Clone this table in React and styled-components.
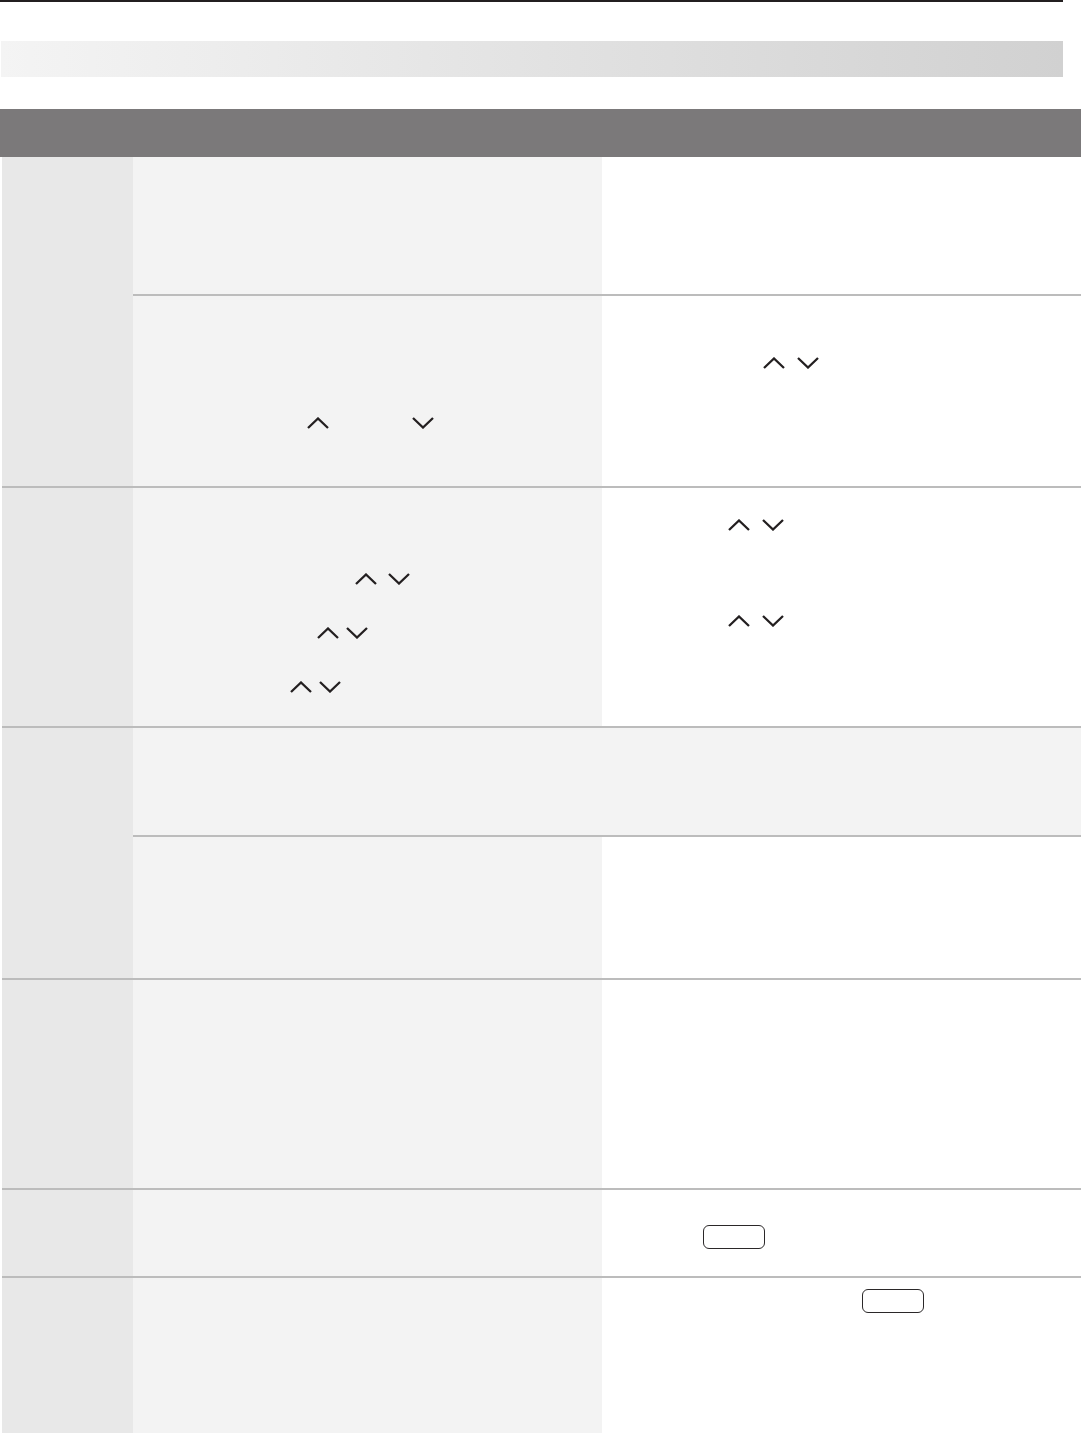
import styled, { createGlobalStyle } from "styled-components";

const GlobalStyle = createGlobalStyle`
  html, body {
    margin: 0;
    padding: 0;
    background: #ffffff;
    font-family: "Liberation Sans", Arial, sans-serif;
  }
`;

const Page = styled.div`
  display: flex;
  flex-direction: column;
  width: 1081px;
  height: 1434px;
  overflow: hidden;
`;

const TopRule = styled.div`
  width: 1063px;
  height: 2px;
  background: #231f20;
`;

const Banner = styled.div`
  width: 1062px;
  height: 36px;
  margin: 39px 0 0 1px;
  background: linear-gradient(to right, #f4f4f4, #d1d1d1);
`;

const HeaderBar = styled.div`
  width: 1081px;
  height: 48px;
  margin-top: 32px;
  background: #7b797a;
`;

const Table = styled.div`
  display: flex;
  flex-direction: column;
  margin-left: 2px;
`;

const Row = styled.div`
  display: grid;
  grid-template-columns: 131px 1fr;
  border-bottom: ${(p) => (p.$last ? "none" : "2px solid #bcbcbc")};
`;

const Label = styled.div`
  background: #e8e8e8;
`;

const SubRows = styled.div`
  display: flex;
  flex-direction: column;
`;

const SubRow = styled.div`
  display: grid;
  grid-template-columns: 469px 1fr;
  height: ${(p) => p.$h}px;
  border-bottom: ${(p) => (p.$divider ? "2px solid #bcbcbc" : "none")};
`;

const Cell = styled.div`
  display: flex;
  flex-direction: column;
  background: ${(p) => (p.$shade ? "#f3f3f3" : "#ffffff")};
`;

const Line = styled.div`
  display: flex;
  align-items: center;
  padding-left: ${(p) => p.$indent}px;
  margin-top: ${(p) => p.$top}px;
  gap: ${(p) => p.$gap || 0}px;
`;

const KeyButton = styled.span`
  display: inline-block;
  width: 60px;
  height: 22px;
  border: 1px solid #2b2829;
  border-radius: 6px;
  background: #ffffff;
`;

const Chevron = ({ down }) => (
  <svg width="22" height="12" viewBox="0 0 22 12" fill="none">
    <polyline
      points={down ? "1,1 11,10.5 21,1" : "1,11 11,1.5 21,11"}
      stroke="#231f20"
      strokeWidth="2.3"
      strokeLinejoin="miter"
    />
  </svg>
);

const Arrows = ({ indent, top, gap }) => (
  <Line $indent={indent} $top={top} $gap={gap}>
    <Chevron />
    <Chevron down />
  </Line>
);

const App = () => {
  return (
    <Page>
      <GlobalStyle />
      <TopRule />
      <Banner />
      <HeaderBar />
      <Table>
        <Row>
          <Label />
          <SubRows>
            <SubRow $h={137} $divider>
              <Cell $shade />
              <Cell />
            </SubRow>
            <SubRow $h={190}>
              <Cell $shade>
                <Arrows indent={174} top={121} gap={83} />
              </Cell>
              <Cell>
                <Arrows indent={161} top={61} gap={12} />
              </Cell>
            </SubRow>
          </SubRows>
        </Row>

        <Row>
          <Label />
          <SubRows>
            <SubRow $h={238}>
              <Cell $shade>
                <Arrows indent={222} top={85} gap={11} />
                <Arrows indent={184} top={42} gap={7} />
                <Arrows indent={157} top={42} gap={7} />
              </Cell>
              <Cell>
                <Arrows indent={126} top={31} gap={12} />
                <Arrows indent={126} top={84} gap={12} />
              </Cell>
            </SubRow>
          </SubRows>
        </Row>

        <Row>
          <Label />
          <SubRows>
            <SubRow $h={107} $divider>
              <Cell $shade />
              <Cell $shade />
            </SubRow>
            <SubRow $h={141}>
              <Cell $shade />
              <Cell />
            </SubRow>
          </SubRows>
        </Row>

        <Row>
          <Label />
          <SubRows>
            <SubRow $h={208}>
              <Cell $shade />
              <Cell />
            </SubRow>
          </SubRows>
        </Row>

        <Row>
          <Label />
          <SubRows>
            <SubRow $h={86}>
              <Cell $shade />
              <Cell>
                <Line $indent={101} $top={35}>
                  <KeyButton />
                </Line>
              </Cell>
            </SubRow>
          </SubRows>
        </Row>

        <Row $last>
          <Label />
          <SubRows>
            <SubRow $h={155}>
              <Cell $shade />
              <Cell>
                <Line $indent={260} $top={11}>
                  <KeyButton />
                </Line>
              </Cell>
            </SubRow>
          </SubRows>
        </Row>
      </Table>
    </Page>
  );
};

export default App;
